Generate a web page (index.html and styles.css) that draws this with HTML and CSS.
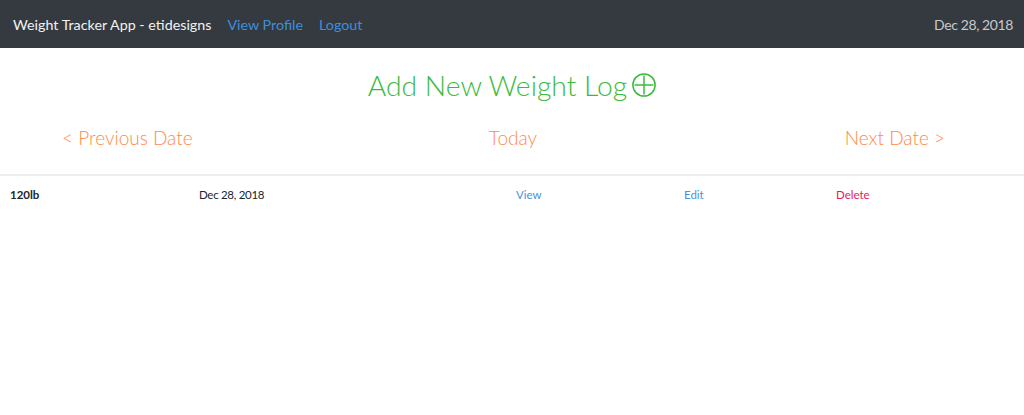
FILE: index.html
```html
<!DOCTYPE html>
<html lang="en">
<head>
<meta charset="utf-8">
<title>Weight Tracker App</title>
<link rel="stylesheet" href="styles.css">
</head>
<body>
<nav class="navbar">
  <div class="nav-left">
    <span class="brand">Weight Tracker App - etidesigns</span>
    <a class="nav-link" href="#">View Profile</a>
    <a class="nav-link" href="#">Logout</a>
  </div>
  <span class="nav-date">Dec 28, 2018</span>
</nav>
<main>
  <h1 class="add-title">Add New Weight Log
    <svg class="plus-icon" viewBox="0 0 24 24" width="24" height="24" aria-hidden="true">
      <circle cx="12" cy="12" r="11.1" fill="none" stroke="currentColor" stroke-width="1.5"/>
      <path d="M12 2.5v19M2.5 12h19" stroke="currentColor" stroke-width="1.5" fill="none"/>
    </svg>
  </h1>
  <div class="date-nav">
    <a class="date-link prev" href="#">&lt; Previous Date</a>
    <a class="date-link today" href="#">Today</a>
    <a class="date-link next" href="#">Next Date &gt;</a>
  </div>
  <div class="log-table">
    <div class="log-row">
      <div class="cell weight">120lb</div>
      <div class="cell date">Dec 28, 2018</div>
      <div class="cell"><a class="act view" href="#">View</a></div>
      <div class="cell"><a class="act edit" href="#">Edit</a></div>
      <div class="cell"><a class="act delete" href="#">Delete</a></div>
    </div>
  </div>
</main>
</body>
</html>
```
FILE: styles.css
```css
* { box-sizing: border-box; }
html, body { margin: 0; padding: 0; }
body {
  font-family: "Lato", "Open Sans", sans-serif;
  color: #212529;
  background: #fff;
}
a { text-decoration: none; }

.navbar {
  height: 48px;
  background: #343a40;
  display: flex;
  align-items: center;
  justify-content: space-between;
  padding: 0 11px 0 13px;
}
.nav-left { display: flex; align-items: center; gap: 16px; }
.brand { color: #f2f2f2; font-size: 14.3px; }
.nav-link { color: #3f8ede; font-size: 14.3px; }
.nav-date { color: #c8c9ca; font-size: 14px; letter-spacing: -0.4px; }

.add-title {
  margin: 18px 0 0;
  font-size: 28.3px;
  font-weight: 300;
  color: #3dba3d;
  line-height: 38px;
  display: flex;
  justify-content: center;
  align-items: center;
  gap: 5px;
}
.plus-icon { width: 24px; height: 24px; }

.date-nav {
  display: grid;
  grid-template-columns: 1fr 1fr 1fr;
  margin: 22px 60px 0 62px;
  font-size: 19px;
  font-weight: 300;
}
.date-link { color: #ff8a48; line-height: 24px; }
.prev { justify-self: start; }
.today { justify-self: center; }
.next { justify-self: end; margin-right: 19px; }

.log-table {
  margin-top: 24px;
  border-top: 2px solid #eeeeee;
}
.log-row {
  display: grid;
  grid-template-columns: 189px 317px 168px 152px 1fr;
  font-size: 11.5px;
  padding-top: 11px;
}
.cell { padding-left: 10px; line-height: 16px; }
.weight { font-weight: 700; }
.date { letter-spacing: -0.3px; }
.act { color: #4a90e2; }
.delete { color: #e8195a; }
```
